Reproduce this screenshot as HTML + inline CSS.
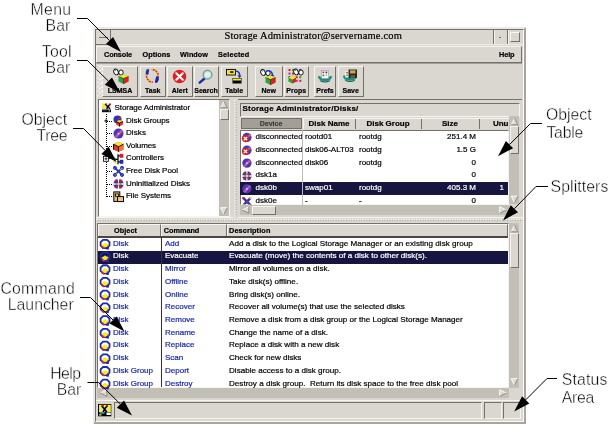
<!DOCTYPE html>
<html><head><meta charset="utf-8"><title>Storage Administrator</title>
<style>
html,body{margin:0;padding:0;background:#fff;}
body{width:609px;height:424px;position:relative;overflow:hidden;font-family:"Liberation Sans",sans-serif;}
div,span{position:absolute;box-sizing:border-box;white-space:nowrap;}
.lbl{font-size:15.8px;line-height:16px;color:#000;-webkit-text-stroke:0.4px #fff;}
.t{font-size:8px;line-height:10px;color:#000;-webkit-text-stroke:0.2px;}
.b{font-weight:bold;}
.bl{color:#1424b4;}
.w{color:#fff;}
.raised{background:#dad7d1;border-top:1px solid #f6f4f0;border-left:1px solid #f6f4f0;border-right:1px solid #76706a;border-bottom:1px solid #76706a;}
.sunk{border-top:1px solid #76706a;border-left:1px solid #76706a;border-right:1px solid #f6f4f0;border-bottom:1px solid #f6f4f0;}
.btn{background:#dad7d1;border-top:1px solid #f6f4f0;border-left:1px solid #f6f4f0;border-right:1px solid #76706a;border-bottom:1px solid #76706a;}
.track{background:#c2bfb7;}
.thumb{background:#dad7d1;border-top:1px solid #f6f4f0;border-left:1px solid #f6f4f0;border-right:1px solid #76706a;border-bottom:1px solid #76706a;}
.sel{background:#15153f;}
svg{position:absolute;left:0;top:0;}
</style></head><body><div id="root" style="left:0;top:0;width:609px;height:424px;will-change:transform;">

<span class="lbl" id="L_Menu" style="left:30.40px;top:1.50px;letter-spacing:0.400px;">Menu</span>
<span class="lbl" id="L_Bar1" style="left:45.40px;top:17.50px;letter-spacing:0.200px;">Bar</span>
<span class="lbl" id="L_Tool" style="left:41.80px;top:43.50px;letter-spacing:0.267px;">Tool</span>
<span class="lbl" id="L_Bar2" style="left:45.40px;top:59.50px;letter-spacing:0.200px;">Bar</span>
<span class="lbl" id="L_Object" style="left:21.40px;top:111.50px;letter-spacing:-0.000px;">Object</span>
<span class="lbl" id="L_Tree" style="left:36.40px;top:128.00px;letter-spacing:-0.267px;">Tree</span>
<span class="lbl" id="L_Command" style="left:0.40px;top:280.50px;letter-spacing:0.267px;">Command</span>
<span class="lbl" id="L_Launcher" style="left:7.80px;top:297.00px;letter-spacing:0.000px;">Launcher</span>
<span class="lbl" id="L_Help" style="left:50.20px;top:365.50px;letter-spacing:-0.533px;">Help</span>
<span class="lbl" id="L_Bar3" style="left:56.80px;top:381.50px;letter-spacing:0.000px;">Bar</span>
<span class="lbl" id="L_ObjectR" style="left:545.90px;top:106.50px;letter-spacing:0.000px;">Object</span>
<span class="lbl" id="L_Table" style="left:546.40px;top:124.50px;letter-spacing:-0.200px;">Table</span>
<span class="lbl" id="L_Splitters" style="left:550.50px;top:178.50px;letter-spacing:0.100px;">Splitters</span>
<span class="lbl" id="L_Status" style="left:561.80px;top:371.50px;letter-spacing:0.160px;">Status</span>
<span class="lbl" id="L_Area" style="left:561.80px;top:389.50px;letter-spacing:-0.267px;">Area</span>
<div class="" style="left:93px;top:27px;width:433px;height:397px;background:#eceae6;"></div>
<div class="" style="left:524px;top:28px;width:2px;height:396px;background:#a8a49e;"></div>
<div class="" style="left:94px;top:422px;width:432px;height:2px;background:#a8a49e;"></div>
<div class="" style="left:95px;top:29px;width:429px;height:393px;border-top:1px solid #76706a;border-left:1px solid #76706a;border-right:1px solid #fbfaf8;border-bottom:1px solid #fbfaf8;background:#dad7d1;"></div>
<div class="" style="left:96px;top:30px;width:427px;height:15px;border-bottom:1px solid #76706a;"></div>
<div class="" style="left:110px;top:30px;width:1px;height:15px;background:#76706a;"></div>
<div class="" style="left:99px;top:37px;width:9px;height:1px;background:#76706a;"></div>
<div class="" style="left:492.5px;top:30px;width:1px;height:15px;background:#76706a;"></div>
<div class="" style="left:493.5px;top:30px;width:1px;height:14px;background:#f4f2ee;"></div>
<div class="" style="left:506.5px;top:30px;width:1px;height:15px;background:#76706a;"></div>
<div class="" style="left:507.5px;top:30px;width:1px;height:14px;background:#f4f2ee;"></div>
<div class="" style="left:111px;top:43.5px;width:412px;height:1px;background:#efede9;"></div>
<div class="" style="left:499px;top:37px;width:2px;height:1px;background:#76706a;"></div>
<div class="" style="left:510px;top:32px;width:10px;height:10px;border:1px solid #76706a;border-top-color:#f6f4f0;border-left-color:#f6f4f0"></div>
<span class="t" style="left:224.5px;top:29.5px;font-size:10.5px;letter-spacing:0.159px;font-family:'Liberation Serif',serif;line-height:12px;">Storage Administrator@servername.com</span>
<div class="raised" style="left:96px;top:46px;width:426px;height:17px;"></div>
<span class="t b" style="left:104px;top:49.5px;font-size:7.3px;letter-spacing:-0.114px;">Console</span>
<span class="t b" style="left:142.5px;top:49.5px;font-size:7.3px;letter-spacing:0.061px;">Options</span>
<span class="t b" style="left:180px;top:49.5px;font-size:7.3px;letter-spacing:0.015px;">Window</span>
<span class="t b" style="left:218px;top:49.5px;font-size:7.3px;letter-spacing:0.184px;">Selected</span>
<span class="t b" style="left:499px;top:49.5px;font-size:7.3px;letter-spacing:-0.080px;">Help</span>
<div class="" style="left:96px;top:63px;width:426px;height:1px;background:#a39e97;"></div>
<div class="btn" style="left:102px;top:66px;width:36px;height:31px;"></div>
<span class="t b" style="left:102px;top:86px;width:36px;text-align:center;font-size:7px;">LSMSA</span>
<div class="btn" style="left:140px;top:66px;width:25.5px;height:31px;"></div>
<span class="t b" style="left:140px;top:86px;width:25.5px;text-align:center;font-size:7px;">Task</span>
<div class="btn" style="left:167px;top:66px;width:25.5px;height:31px;"></div>
<span class="t b" style="left:167px;top:86px;width:25.5px;text-align:center;font-size:7px;">Alert</span>
<div class="btn" style="left:193.5px;top:66px;width:25px;height:31px;"></div>
<span class="t b" style="left:193.5px;top:86px;width:25px;text-align:center;font-size:7px;">Search</span>
<div class="btn" style="left:220.5px;top:66px;width:27.5px;height:31px;"></div>
<span class="t b" style="left:220.5px;top:86px;width:27.5px;text-align:center;font-size:7px;">Table</span>
<div class="btn" style="left:255px;top:66px;width:27.5px;height:31px;"></div>
<span class="t b" style="left:255px;top:86px;width:27.5px;text-align:center;font-size:7px;">New</span>
<div class="btn" style="left:283.5px;top:66px;width:25.5px;height:31px;"></div>
<span class="t b" style="left:283.5px;top:86px;width:25.5px;text-align:center;font-size:7px;">Props</span>
<div class="btn" style="left:314px;top:66px;width:22px;height:31px;"></div>
<span class="t b" style="left:314px;top:86px;width:22px;text-align:center;font-size:7px;">Prefs</span>
<div class="btn" style="left:337.5px;top:66px;width:26.5px;height:31px;"></div>
<span class="t b" style="left:337.5px;top:86px;width:26.5px;text-align:center;font-size:7px;">Save</span>
<div class="sunk" style="left:98px;top:99px;width:132px;height:118px;background:#fff;"></div>
<div class="track" style="left:219px;top:100px;width:10px;height:116px;"></div>
<div class="thumb" style="left:220px;top:109px;width:9px;height:11px;"></div>
<span class="t" style="left:114.5px;top:102.9px;font-size:8px;letter-spacing:-0.068px;">Storage Administrator</span>
<span class="t" style="left:126px;top:115.5px;font-size:8px;letter-spacing:-0.047px;">Disk Groups</span>
<span class="t" style="left:126px;top:128.1px;font-size:8px;letter-spacing:0.089px;">Disks</span>
<span class="t" style="left:126px;top:140.7px;font-size:8px;letter-spacing:-0.098px;">Volumes</span>
<span class="t" style="left:126px;top:153.3px;font-size:8px;letter-spacing:-0.062px;">Controllers</span>
<span class="t" style="left:126px;top:165.9px;font-size:8px;letter-spacing:-0.033px;">Free Disk Pool</span>
<span class="t" style="left:126px;top:178.5px;font-size:8px;letter-spacing:-0.048px;">Uninitialized Disks</span>
<span class="t" style="left:126px;top:191.1px;font-size:8px;letter-spacing:-0.066px;">File Systems</span>
<div style="left:106px;top:114px;width:0;height:83px;border-left:1px dotted #000;"></div>
<div style="left:107px;top:120.5px;width:5px;height:0;border-top:1px dotted #000;"></div>
<div style="left:107px;top:133.1px;width:5px;height:0;border-top:1px dotted #000;"></div>
<div style="left:107px;top:145.7px;width:5px;height:0;border-top:1px dotted #000;"></div>
<div style="left:107px;top:158.3px;width:5px;height:0;border-top:1px dotted #000;"></div>
<div style="left:107px;top:170.9px;width:5px;height:0;border-top:1px dotted #000;"></div>
<div style="left:107px;top:183.5px;width:5px;height:0;border-top:1px dotted #000;"></div>
<div style="left:107px;top:196.1px;width:5px;height:0;border-top:1px dotted #000;"></div>
<div class="" style="left:238px;top:99px;width:284px;height:1px;background:#76706a;"></div>
<div class="sunk" style="left:240px;top:102.5px;width:280px;height:14.5px;"></div>
<span class="t b" style="left:242.5px;top:104px;font-size:8px;letter-spacing:0.216px;">Storage Administrator/Disks/</span>
<div class="sunk" style="left:240px;top:130px;width:269px;height:75px;background:#fff;"></div>
<div class="" style="left:240px;top:117.5px;width:269px;height:12px;background:#dad7d1;border-top:1px solid #f6f4f0;"></div>
<div class="" style="left:240.5px;top:118px;width:61.5px;height:11px;background:#a39e96;border:1px solid #76706a;"></div>
<span class="t b" style="left:240px;top:118.5px;width:62px;text-align:center;font-size:7px;color:#1a1a1a;opacity:0.75;">Device</span>
<span class="t b" style="left:302px;top:119px;width:54px;text-align:center;font-size:8px;">Disk Name</span>
<span class="t b" style="left:356px;top:119px;width:64px;text-align:center;font-size:8px;">Disk Group</span>
<span class="t b" style="left:421px;top:119px;width:58px;text-align:center;font-size:8px;">Size</span>
<span class="t b" style="left:480px;top:119px;width:28.500px;text-align:right;font-size:8px;">Unu</span>
<div class="" style="left:302.5px;top:118px;width:1px;height:11px;background:#f6f4f0;"></div>
<div class="" style="left:355px;top:119px;width:1px;height:10px;background:#76706a;"></div>
<div class="" style="left:421px;top:119px;width:1px;height:10px;background:#76706a;"></div>
<div class="" style="left:479px;top:119px;width:1px;height:10px;background:#76706a;"></div>
<span class="t" style="left:255.5px;top:131.8px;">disconnected</span>
<span class="t" style="left:305px;top:131.8px;">rootd01</span>
<span class="t" style="left:359px;top:131.8px;">rootdg</span>
<span class="t" style="left:421px;top:131.8px;width:55px;text-align:right;">251.4 M</span>
<span class="t" style="left:480px;top:131.8px;width:24px;text-align:right;"></span>
<span class="t" style="left:255.5px;top:144.65px;">disconnected</span>
<span class="t" style="left:305px;top:144.65px;">disk06-ALT03</span>
<span class="t" style="left:359px;top:144.65px;">rootdg</span>
<span class="t" style="left:421px;top:144.65px;width:55px;text-align:right;">1.5 G</span>
<span class="t" style="left:480px;top:144.65px;width:24px;text-align:right;"></span>
<span class="t" style="left:255.5px;top:157.5px;">disconnected</span>
<span class="t" style="left:305px;top:157.5px;">disk06</span>
<span class="t" style="left:359px;top:157.5px;">rootdg</span>
<span class="t" style="left:421px;top:157.5px;width:55px;text-align:right;">0</span>
<span class="t" style="left:480px;top:157.5px;width:24px;text-align:right;"></span>
<span class="t" style="left:255.5px;top:170.35px;">dsk1a</span>
<span class="t" style="left:305px;top:170.35px;"></span>
<span class="t" style="left:359px;top:170.35px;"></span>
<span class="t" style="left:421px;top:170.35px;width:55px;text-align:right;">0</span>
<span class="t" style="left:480px;top:170.35px;width:24px;text-align:right;"></span>
<div class="sel" style="left:240px;top:182px;width:268px;height:12.5px;"></div>
<span class="t w" style="left:255.5px;top:183.2px;">dsk0b</span>
<span class="t w" style="left:305px;top:183.2px;">swap01</span>
<span class="t w" style="left:359px;top:183.2px;">rootdg</span>
<span class="t w" style="left:421px;top:183.2px;width:55px;text-align:right;">405.3 M</span>
<span class="t w" style="left:480px;top:183.2px;width:24px;text-align:right;">1</span>
<span class="t" style="left:255.5px;top:196.05px;">dsk0e</span>
<span class="t" style="left:305px;top:196.05px;">-</span>
<span class="t" style="left:359px;top:196.05px;">-</span>
<span class="t" style="left:421px;top:196.05px;width:55px;text-align:right;">0</span>
<span class="t" style="left:480px;top:196.05px;width:24px;text-align:right;"></span>
<div class="" style="left:302px;top:130px;width:1px;height:75px;background:#bbb;"></div>
<div class="track" style="left:509px;top:116px;width:10px;height:88px;"></div>
<div class="thumb" style="left:510px;top:126px;width:9px;height:28px;"></div>
<div class="track" style="left:240px;top:205px;width:269px;height:10px;"></div>
<div class="thumb" style="left:251.5px;top:205.5px;width:24px;height:9.5px;"></div>
<div class="" style="left:96px;top:217px;width:137px;height:1px;background:#f4f2ee;"></div>
<div class="" style="left:238px;top:217px;width:285px;height:1px;background:#f4f2ee;"></div>
<div class="sunk" style="left:97px;top:223px;width:412px;height:165px;background:#fff;"></div>
<div class="" style="left:98px;top:224px;width:410px;height:13.5px;background:#dad7d1;border-bottom:2px solid #4c4742;"></div>
<div class="btn" style="left:98px;top:224px;width:63px;height:12px;border-bottom:none;"></div>
<div class="btn" style="left:161px;top:224px;width:65.5px;height:12px;border-bottom:none;"></div>
<div class="btn" style="left:226.5px;top:224px;width:281.5px;height:12px;border-bottom:none;"></div>
<span class="t b" style="left:114px;top:225.5px;font-size:7.3px;letter-spacing:0.047px;">Object</span>
<span class="t b" style="left:163.8px;top:225.5px;font-size:7.3px;letter-spacing:-0.027px;">Command</span>
<span class="t b" style="left:229px;top:225.5px;font-size:7.3px;letter-spacing:0.122px;">Description</span>
<span class="t bl" style="left:113px;top:238.7px;">Disk</span>
<span class="t bl" style="left:165px;top:238.7px;">Add</span>
<span class="t" style="left:229px;top:238.7px;font-size:8.1px;letter-spacing:0.013px;">Add a disk to the Logical Storage Manager or an existing disk group</span>
<div class="sel" style="left:98px;top:251px;width:410px;height:12.7px;"></div>
<span class="t w" style="left:113px;top:251.42px;">Disk</span>
<span class="t w" style="left:165px;top:251.42px;">Evacuate</span>
<span class="t w" style="left:229px;top:251.42px;font-size:8.1px;letter-spacing:0.000px;">Evacuate (move) the contents of a disk to other disk(s).</span>
<span class="t bl" style="left:113px;top:264.14px;">Disk</span>
<span class="t bl" style="left:165px;top:264.14px;">Mirror</span>
<span class="t" style="left:229px;top:264.14px;font-size:8.1px;letter-spacing:0.000px;">Mirror all volumes on a disk.</span>
<span class="t bl" style="left:113px;top:276.86px;">Disk</span>
<span class="t bl" style="left:165px;top:276.86px;">Offline</span>
<span class="t" style="left:229px;top:276.86px;font-size:8.1px;letter-spacing:0.000px;">Take disk(s) offline.</span>
<span class="t bl" style="left:113px;top:289.58px;">Disk</span>
<span class="t bl" style="left:165px;top:289.58px;">Online</span>
<span class="t" style="left:229px;top:289.58px;font-size:8.1px;letter-spacing:0.000px;">Bring disk(s) online.</span>
<span class="t bl" style="left:113px;top:302.3px;">Disk</span>
<span class="t bl" style="left:165px;top:302.3px;">Recover</span>
<span class="t" style="left:229px;top:302.3px;font-size:8.1px;letter-spacing:0.000px;">Recover all volume(s) that use the selected disks</span>
<span class="t bl" style="left:113px;top:315.02px;">Disk</span>
<span class="t bl" style="left:165px;top:315.02px;">Remove</span>
<span class="t" style="left:229px;top:315.02px;font-size:8.1px;letter-spacing:-0.002px;">Remove a disk from a disk group or the Logical Storage Manager</span>
<span class="t bl" style="left:113px;top:327.74px;">Disk</span>
<span class="t bl" style="left:165px;top:327.74px;">Rename</span>
<span class="t" style="left:229px;top:327.74px;font-size:8.1px;letter-spacing:0.000px;">Change the name of a disk.</span>
<span class="t bl" style="left:113px;top:340.46px;">Disk</span>
<span class="t bl" style="left:165px;top:340.46px;">Replace</span>
<span class="t" style="left:229px;top:340.46px;font-size:8.1px;letter-spacing:0.000px;">Replace a disk with a new disk</span>
<span class="t bl" style="left:113px;top:353.18px;">Disk</span>
<span class="t bl" style="left:165px;top:353.18px;">Scan</span>
<span class="t" style="left:229px;top:353.18px;font-size:8.1px;letter-spacing:0.000px;">Check for new disks</span>
<span class="t bl" style="left:113px;top:365.9px;">Disk Group</span>
<span class="t bl" style="left:165px;top:365.9px;">Deport</span>
<span class="t" style="left:229px;top:365.9px;font-size:8.1px;letter-spacing:0.000px;">Disable access to a disk group.</span>
<span class="t bl" style="left:113px;top:378.62px;">Disk Group</span>
<span class="t bl" style="left:165px;top:378.62px;">Destroy</span>
<span class="t" style="left:229px;top:378.62px;font-size:8.1px;letter-spacing:0.000px;">Destroy a disk group.&nbsp; Return its disk space to the free disk pool</span>
<div class="" style="left:161px;top:237px;width:1px;height:150px;background:#333;"></div>
<div class="track" style="left:509px;top:223px;width:10px;height:165px;"></div>
<div class="thumb" style="left:510px;top:233px;width:9px;height:35px;"></div>
<div class="track" style="left:97px;top:388px;width:412px;height:10px;"></div>
<div class="" style="left:96px;top:400px;width:427px;height:1px;background:#f6f4f0;"></div>
<div class="sunk" style="left:114px;top:402px;width:368px;height:17px;"></div>
<div class="sunk" style="left:484px;top:402px;width:18px;height:17px;"></div>
<div class="sunk" style="left:503px;top:402px;width:18px;height:17px;"></div>
<svg width="609" height="424" viewBox="0 0 609 424"><defs><pattern id="dotv" x="233" y="100" width="5" height="2.560" patternUnits="userSpaceOnUse"><rect x="1.500" y="0.300" width="1.200" height="1.200" fill="#fff"/><rect x="2.600" y="1.400" width="1" height="1" fill="#9a958e"/></pattern><pattern id="doth" x="96" y="218" width="2.560" height="4.500" patternUnits="userSpaceOnUse"><rect x="0.300" y="0.800" width="1.200" height="1.200" fill="#fff"/><rect x="1.400" y="1.900" width="1" height="1" fill="#9a958e"/></pattern><pattern id="dotg" x="97" y="65" width="4.400" height="4.400" patternUnits="userSpaceOnUse"><path d="M0.200 0.200 L2 2 M4.200 0.200 L2.400 2 M0.200 4.200 L2 2.400 M4.200 4.200 L2.400 2.400" stroke="#fff" stroke-width="1"/><path d="M1 1.200 L1.800 2.800 M3.200 3 L4 4.400" stroke="#9a958e" stroke-width="0.700"/></pattern><clipPath id="ctab"><rect x="240" y="130" width="268" height="74.500"/></clipPath></defs><rect x="97.500" y="65" width="5" height="31.500" fill="url(#dotg)"/><g transform="translate(113.5,68.5) scale(1)"><g transform="translate(0,0) scale(1)"><ellipse cx="2.5" cy="3.5" rx="2.2" ry="3" fill="#fff" stroke="#000" stroke-width="0.9" transform="rotate(-25 2.5 3.5)"/><ellipse cx="7.5" cy="4" rx="2.2" ry="2.6" fill="#fff" stroke="#000" stroke-width="0.9"/><path d="M1.5 2.5 L3 1.2" stroke="#20b090" stroke-width="1"/></g><g transform="translate(5,5) scale(1)"><path d="M0 3 L5 1 L10 3 L10 8 L5 10.5 L0 8Z" fill="#20a838"/><path d="M5 5 L10 3 L10 8 L5 10.5Z" fill="#f01818"/><path d="M0 3 L5 1 L10 3 L5 5Z" fill="#f4ec20"/><path d="M0 3 L5 5 L10 3 M5 5 L5 10.5" stroke="#303030" stroke-width="0.7" fill="none"/></g></g><g transform="translate(144.8,68.8) scale(1)"><path d="M2 0.500 L4.500 0.500 L4 3 L3.500 6 L1 6 L1 3Z" fill="#1c28b8"/><path d="M12.500 14 L10 14 L10.500 11 L11.500 7.500 L14 7.500 L14 11Z" fill="#1c28b8"/><path d="M1.500 6 L2 9.500 L4.500 12.500 L8 13.500" stroke="#e82020" stroke-width="1.500" fill="none"/><path d="M1.500 6 L2 9.500 L4.500 12.500 L8 13.500" stroke="#f4e020" stroke-width="1.500" fill="none" stroke-dasharray="1.200 1.800"/><path d="M7 0.800 L10.500 1.500 L13 4.500 L13.500 7.500" stroke="#e82020" stroke-width="1.500" fill="none"/><path d="M7 0.800 L10.500 1.500 L13 4.500 L13.500 7.500" stroke="#f4e020" stroke-width="1.500" fill="none" stroke-dasharray="1.200 1.800"/></g><g transform="translate(172.5,69.5) scale(1)"><circle cx="7" cy="7" r="6.8" fill="#e81c1c"/><path d="M3.8 3.8 L10.2 10.2 M10.2 3.8 L3.8 10.2" stroke="#fff" stroke-width="2.2" stroke-linecap="round"/></g><g transform="translate(198.5,69.5) scale(1)"><path d="M6 9 L1.2 13.2" stroke="#1c2cb0" stroke-width="2.4" stroke-linecap="round"/><circle cx="9" cy="5.2" r="4.4" fill="#b8ece0" stroke="#8a9098" stroke-width="1.3"/><circle cx="9" cy="5.2" r="2.4" fill="#d8f8f0"/></g><g transform="translate(226,68.5) scale(1)"><rect x="0.5" y="1" width="9" height="5.5" fill="#f4e820" stroke="#000" stroke-width="0.9"/><rect x="4" y="2.8" width="3.5" height="1.5" fill="#000"/><path d="M9.5 2.5 C13 2.5 14 5 13.5 8" stroke="#2038c8" stroke-width="1.6" fill="none"/><path d="M11.5 7 L15.5 7 L13.5 9.8Z" fill="#2038c8"/><rect x="6.5" y="9.5" width="9" height="5.5" fill="#000"/><rect x="7" y="10" width="8" height="2" fill="#f4e820"/></g><g transform="translate(260.5,69) scale(1)"><g transform="translate(0,0) scale(1)"><ellipse cx="2.5" cy="3.5" rx="2.2" ry="3" fill="#fff" stroke="#000" stroke-width="0.9" transform="rotate(-25 2.5 3.5)"/><ellipse cx="7.5" cy="4" rx="2.2" ry="2.6" fill="#fff" stroke="#000" stroke-width="0.9"/><path d="M1.5 2.5 L3 1.2" stroke="#20b090" stroke-width="1"/></g><path d="M6 2 C10 1 12 3.5 12 6.5" stroke="#2038c8" stroke-width="1.6" fill="none"/><path d="M10 6 L14 6 L12 8.6Z" fill="#2038c8"/><g transform="translate(5,5.5) scale(1)"><path d="M0 3 L5 1 L10 3 L10 8 L5 10.5 L0 8Z" fill="#20a838"/><path d="M5 5 L10 3 L10 8 L5 10.5Z" fill="#f01818"/><path d="M0 3 L5 1 L10 3 L5 5Z" fill="#f4ec20"/><path d="M0 3 L5 5 L10 3 M5 5 L5 10.5" stroke="#303030" stroke-width="0.7" fill="none"/></g></g><g transform="translate(287.5,68.5) scale(1)"><rect x="1" y="0.5" width="2" height="2" fill="#e02020"/><rect x="4.6" y="0.5" width="2" height="2" fill="#20a030"/><rect x="8.2" y="0.5" width="2" height="2" fill="#e0a020"/><rect x="11.8" y="0.5" width="2" height="2" fill="#2030c0"/><rect x="1" y="4.1" width="2" height="2" fill="#c020c0"/><rect x="4.6" y="4.1" width="2" height="2" fill="#e02020"/><rect x="8.2" y="4.1" width="2" height="2" fill="#20a030"/><rect x="11.8" y="4.1" width="2" height="2" fill="#e0a020"/><rect x="1" y="7.7" width="2" height="2" fill="#2030c0"/><rect x="4.6" y="7.7" width="2" height="2" fill="#c020c0"/><rect x="8.2" y="7.7" width="2" height="2" fill="#e02020"/><rect x="11.8" y="7.7" width="2" height="2" fill="#20a030"/><rect x="1" y="11.3" width="2" height="2" fill="#e0a020"/><rect x="4.6" y="11.3" width="2" height="2" fill="#2030c0"/><rect x="8.2" y="11.3" width="2" height="2" fill="#c020c0"/><rect x="11.8" y="11.3" width="2" height="2" fill="#e02020"/><g transform="translate(6,0) scale(1)"><ellipse cx="2.5" cy="3.5" rx="2.2" ry="3" fill="#fff" stroke="#000" stroke-width="0.9" transform="rotate(-25 2.5 3.5)"/><ellipse cx="7.5" cy="4" rx="2.2" ry="2.6" fill="#fff" stroke="#000" stroke-width="0.9"/><path d="M1.5 2.5 L3 1.2" stroke="#20b090" stroke-width="1"/></g><path d="M1 9 L5 7 L8.5 9 L8.5 13 L5 15 L1 13Z" fill="#20a838"/><path d="M5 11 L8.5 9 L8.5 13 L5 15Z" fill="#f01818"/><path d="M1 9 L5 7 L8.5 9 L5 11Z" fill="#f4ec20"/></g><g transform="translate(317.5,70) scale(1)"><path d="M0.5 6.5 C1.5 5.5 3 6.2 3.5 7.2 L11.5 7.2 C12 6.2 13.5 5.5 14.5 6.5 C14.5 9 12 11.2 7.5 11.2 C3 11.2 0.5 9 0.5 6.5Z" fill="#189080"/><path d="M2 9.8 C5 12 10 12 13 9.8 L12 11.6 C9 12.8 6 12.8 3 11.6Z" fill="#0c5c50"/><rect x="4" y="0.500" width="7" height="8" fill="#fff" stroke="#889" stroke-width="0.5"/><rect x="5" y="1.5" width="1.800" height="1.800" fill="#e02020"/><rect x="8" y="1.5" width="1.800" height="1.800" fill="#2030c0"/><rect x="5" y="4.5" width="1.800" height="1.800" fill="#20a030"/><rect x="8" y="4.5" width="1.800" height="1.300" fill="#e0a020"/></g><g transform="translate(342.5,69.5) scale(1)"><path d="M0.5 6.5 C1.5 5.5 3 6.2 3.5 7.2 L11.5 7.2 C12 6.2 13.5 5.5 14.5 6.5 C14.5 9 12 11.2 7.5 11.2 C3 11.2 0.5 9 0.5 6.5Z" fill="#189080"/><path d="M2 9.8 C5 12 10 12 13 9.8 L12 11.6 C9 12.8 6 12.8 3 11.6Z" fill="#0c5c50"/><rect x="3" y="1.500" width="5" height="6.500" fill="#fff"/><rect x="3.800" y="2.300" width="1.600" height="1.600" fill="#e02020"/><rect x="3.800" y="5" width="1.600" height="1.600" fill="#20a030"/><rect x="6" y="0" width="8.500" height="8.500" fill="#282820"/><rect x="7.500" y="0.800" width="5.500" height="3.200" fill="#c8a838"/><rect x="8" y="5.500" width="4.500" height="3" fill="#605840"/></g><polygon points="224.0,101.2 227.3,107.8 220.7,107.8" fill="#dddad4"/><line x1="220.7" y1="107.8" x2="224.0" y2="101.2" stroke="#fff" stroke-width="0.9"/><line x1="224.0" y1="101.2" x2="227.3" y2="107.8" stroke="#8a857e" stroke-width="0.9"/><line x1="227.3" y1="107.8" x2="220.7" y2="107.8" stroke="#8a857e" stroke-width="0.9"/><polygon points="220.7,207.7 227.3,207.7 224.0,214.3" fill="#dddad4"/><line x1="220.7" y1="207.7" x2="227.3" y2="207.7" stroke="#fff" stroke-width="0.9"/><line x1="224.0" y1="214.3" x2="220.7" y2="207.7" stroke="#fff" stroke-width="0.9"/><line x1="227.3" y1="207.7" x2="224.0" y2="214.3" stroke="#8a857e" stroke-width="0.9"/><g transform="translate(102,103.4) scale(1)"><rect x="0" y="0" width="4" height="6.500" fill="#f4f030"/><rect x="3" y="1.500" width="6" height="5" fill="#d8d8d4"/><path d="M3 0.500 L5.500 3.200 L8.500 0.500 M5.500 3.200 L4.800 6 M6 3 L7.800 5.500" stroke="#000" stroke-width="1.300" fill="none"/><rect x="3.800" y="0" width="1.400" height="1.400" fill="#e81818"/><rect x="7.200" y="0" width="1.400" height="1.400" fill="#e81818"/><rect x="0" y="6.200" width="9" height="2.600" fill="#000"/><rect x="0.500" y="7" width="4" height="1" fill="#2030d0"/><rect x="6.500" y="7" width="1.500" height="1" fill="#d8d8d4"/></g><g transform="translate(113,115.5) scale(1)"><circle cx="4.5" cy="4" r="4" fill="#2a34b8"/><path d="M4.5 4 L7.5 0.8 L8.6 3Z" fill="#d02828"/><path d="M3 6 L6.5 4.5 L10 6 L10 9 L6.5 11 L3 9Z" fill="#e83818"/><path d="M3 6 L6.5 4.5 L10 6 L6.5 7.6Z" fill="#f4e020"/><path d="M3 6 L6.5 7.6 L10 6 M6.5 7.6 L6.5 11" stroke="#000" stroke-width="0.9" fill="none"/></g><g transform="translate(113,128.1) scale(1)"><circle cx="5.5" cy="5.5" r="5" fill="#4a38b8"/><path d="M1.2 8.2 L8.2 1.2 L10 3.4 L3.4 10Z" fill="#b048b0"/><path d="M3 9 L9 3" stroke="#e070b0" stroke-width="0.8"/><circle cx="5.5" cy="5.5" r="0.9" fill="#e8d8f0"/></g><g transform="translate(113,140.7) scale(1)"><path d="M0.5 3.5 L5.5 1 L10.5 3.5 L10.5 9 L5.5 11 L0.5 9Z" fill="#e83818"/><path d="M5.5 6 L10.5 3.5 L10.5 9 L5.5 11Z" fill="#f07828"/><path d="M0.5 3.5 L5.5 1 L10.5 3.5 L5.5 6Z" fill="#f8e820"/><path d="M0.5 3.5 L5.5 6 L10.5 3.5 M5.5 6 L5.5 11 M0.5 3.5 L0.5 9" stroke="#000" stroke-width="0.9" fill="none"/></g><g transform="translate(113,153.3) scale(1)"><path d="M1 6 L5 6 M5 1 L5 11 M5 2.5 L7 2.5 M5 8.5 L7 8.5" stroke="#000" stroke-width="1.2" fill="none"/><rect x="6.8" y="0.5" width="3.5" height="4" fill="#e81818"/><rect x="6.8" y="6.5" width="3.5" height="4" fill="#1828c0"/><path d="M0.5 7.5 L3.5 10.5" stroke="#e8e020" stroke-width="1.4"/><path d="M1 4 L3 6" stroke="#20a030" stroke-width="1.2"/></g><g transform="translate(113,165.9) scale(1)"><path d="M1.5 1.5 L9.5 9.5 M9.5 1.5 L1.5 9.5" stroke="#2434c0" stroke-width="1.8" stroke-linecap="round"/><circle cx="2" cy="2" r="1.6" fill="none" stroke="#2434c0" stroke-width="1"/><circle cx="9" cy="2" r="1.6" fill="none" stroke="#2434c0" stroke-width="1"/><circle cx="2" cy="9" r="1.6" fill="none" stroke="#2434c0" stroke-width="1"/><circle cx="9" cy="9" r="1.6" fill="none" stroke="#2434c0" stroke-width="1"/><path d="M7 4 L8.6 2.4 M3 8.6 L4.4 7.2" stroke="#f0e040" stroke-width="1"/></g><g transform="translate(113,178.5) scale(1)"><circle cx="5.5" cy="5.5" r="5" fill="#2e2eb0"/><path d="M5.5 5.5 L1.5 2 L3 0.8Z M5.5 5.5 L9.5 9 L8 10.2Z M5.5 5.5 L9.6 2.2 L8.2 1Z M5.5 5.5 L1.4 8.8 L2.8 10Z" fill="#e02020"/><path d="M5.5 5.5 L0.5 4.5 L0.5 6.5Z M5.5 5.5 L10.5 4.5 L10.5 6.5Z M5.5 5.5 L4.5 0.5 L6.5 0.5Z M5.5 5.5 L4.5 10.5 L6.5 10.5Z" fill="#fff"/><circle cx="5.5" cy="5.5" r="1.3" fill="#f0e040"/></g><g transform="translate(113,191.1) scale(1)"><rect x="0.8" y="0.8" width="6" height="9.5" fill="#e8c070" stroke="#000" stroke-width="1"/><rect x="4.5" y="5.5" width="6" height="5" fill="#f0c880" stroke="#000" stroke-width="1"/><rect x="2.5" y="2.8" width="3" height="2.4" fill="#f8e0a0" stroke="#000" stroke-width="0.8"/></g><rect x="103.500" y="156.300" width="5" height="5" fill="#fff" stroke="#000" stroke-width="0.800"/><path d="M104.500 158.800 L107.500 158.800 M106 157.300 L106 160.300" stroke="#000" stroke-width="0.800"/><path d="M104.300 120.900 L107.800 120.900 M106 119.200 L106 122.600" stroke="#000" stroke-width="0.900"/><rect x="233" y="100" width="5" height="117" fill="url(#dotv)"/><g clip-path="url(#ctab)"><g transform="translate(241.8,132.3) scale(0.93)"><circle cx="5.5" cy="5.5" r="5" fill="#4a38b8"/><path d="M1.2 8.2 L8.2 1.2 L10 3.4 L3.4 10Z" fill="#b048b0"/><path d="M3 9 L9 3" stroke="#e070b0" stroke-width="0.8"/><circle cx="5.5" cy="5.5" r="0.9" fill="#e8d8f0"/><circle cx="4" cy="6.800" r="3.800" fill="#e01818"/><path d="M2.200 5 L5.800 8.600 M5.800 5 L2.200 8.600" stroke="#fff" stroke-width="1.400"/></g></g><g clip-path="url(#ctab)"><g transform="translate(241.8,145.15) scale(0.93)"><circle cx="5.5" cy="5.5" r="5" fill="#4a38b8"/><path d="M1.2 8.2 L8.2 1.2 L10 3.4 L3.4 10Z" fill="#b048b0"/><path d="M3 9 L9 3" stroke="#e070b0" stroke-width="0.8"/><circle cx="5.5" cy="5.5" r="0.9" fill="#e8d8f0"/><circle cx="4" cy="6.800" r="3.800" fill="#e01818"/><path d="M2.200 5 L5.800 8.600 M5.800 5 L2.200 8.600" stroke="#fff" stroke-width="1.400"/></g></g><g clip-path="url(#ctab)"><g transform="translate(241.8,158) scale(0.93)"><circle cx="5.5" cy="5.5" r="5" fill="#4a38b8"/><path d="M1.2 8.2 L8.2 1.2 L10 3.4 L3.4 10Z" fill="#b048b0"/><path d="M3 9 L9 3" stroke="#e070b0" stroke-width="0.8"/><circle cx="5.5" cy="5.5" r="0.9" fill="#e8d8f0"/></g></g><g clip-path="url(#ctab)"><g transform="translate(241.8,170.85) scale(0.93)"><circle cx="5.5" cy="5.5" r="5" fill="#2e2eb0"/><path d="M5.5 5.5 L1.5 2 L3 0.8Z M5.5 5.5 L9.5 9 L8 10.2Z M5.5 5.5 L9.6 2.2 L8.2 1Z M5.5 5.5 L1.4 8.8 L2.8 10Z" fill="#e02020"/><path d="M5.5 5.5 L0.5 4.5 L0.5 6.5Z M5.5 5.5 L10.5 4.5 L10.5 6.5Z M5.5 5.5 L4.5 0.5 L6.5 0.5Z M5.5 5.5 L4.5 10.5 L6.5 10.5Z" fill="#fff"/><circle cx="5.5" cy="5.5" r="1.3" fill="#f0e040"/></g></g><g clip-path="url(#ctab)"><g transform="translate(241.8,183.7) scale(0.93)"><circle cx="5.5" cy="5.5" r="5" fill="#4a38b8"/><path d="M1.2 8.2 L8.2 1.2 L10 3.4 L3.4 10Z" fill="#b048b0"/><path d="M3 9 L9 3" stroke="#e070b0" stroke-width="0.8"/><circle cx="5.5" cy="5.5" r="0.9" fill="#e8d8f0"/></g></g><g clip-path="url(#ctab)"><g transform="translate(241.8,196.55) scale(0.93)"><path d="M1.5 1.5 L9.5 9.5 M9.5 1.5 L1.5 9.5" stroke="#2434c0" stroke-width="2.600"/><rect x="0.500" y="0.500" width="2.200" height="2.200" fill="#e02020"/><rect x="8.300" y="8.300" width="2.200" height="2.200" fill="#e02020"/><rect x="8.300" y="0.500" width="2.200" height="2.200" fill="#f0e020"/><rect x="0.500" y="8.300" width="2.200" height="2.200" fill="#f0e020"/><rect x="4.500" y="4.500" width="2" height="2" fill="#e02020"/></g></g><polygon points="514.5,118.2 517.8,124.8 511.2,124.8" fill="#dddad4"/><line x1="511.2" y1="124.8" x2="514.5" y2="118.2" stroke="#fff" stroke-width="0.9"/><line x1="514.5" y1="118.2" x2="517.8" y2="124.8" stroke="#8a857e" stroke-width="0.9"/><line x1="517.8" y1="124.8" x2="511.2" y2="124.8" stroke="#8a857e" stroke-width="0.9"/><polygon points="511.2,196.2 517.8,196.2 514.5,202.8" fill="#dddad4"/><line x1="511.2" y1="196.2" x2="517.8" y2="196.2" stroke="#fff" stroke-width="0.9"/><line x1="514.5" y1="202.8" x2="511.2" y2="196.2" stroke="#fff" stroke-width="0.9"/><line x1="517.8" y1="196.2" x2="514.5" y2="202.8" stroke="#8a857e" stroke-width="0.9"/><polygon points="242.2,210.0 248.8,206.7 248.8,213.3" fill="#dddad4"/><line x1="242.2" y1="210.0" x2="248.8" y2="206.7" stroke="#fff" stroke-width="0.9"/><line x1="248.8" y1="206.7" x2="248.8" y2="213.3" stroke="#8a857e" stroke-width="0.9"/><line x1="248.8" y1="213.3" x2="242.2" y2="210.0" stroke="#8a857e" stroke-width="0.9"/><polygon points="499.7,206.7 506.3,210.0 499.7,213.3" fill="#dddad4"/><line x1="499.7" y1="213.3" x2="499.7" y2="206.7" stroke="#fff" stroke-width="0.9"/><line x1="499.7" y1="206.7" x2="506.3" y2="210.0" stroke="#fff" stroke-width="0.9"/><line x1="506.3" y1="210.0" x2="499.7" y2="213.3" stroke="#8a857e" stroke-width="0.9"/><rect x="96" y="218" width="427" height="4.500" fill="url(#doth)"/><g transform="translate(99.8,239) scale(1)"><path d="M3.3 0.8 L7.200 0.8 L9.700 3.2 L9.700 6.500 L7.600 9 L3.200 9 L0.800 6.500 L0.800 3.200Z" fill="#fff" stroke="#1a2ab4" stroke-width="1.800"/><path d="M1.800 5.600 L4.300 4.600 L5.200 3.600 L6.200 4.600 L8.800 5.400 L7.300 7.800 L5.200 8.600 L3.200 8Z" fill="#f8ec20"/><path d="M1.500 6.500 L3.300 7.300 L5 9.800 L4 10.300 L1.800 8.300Z" fill="#e82020"/><path d="M7.800 6.600 L8.800 6.200 L8.300 8 L7.300 8.200Z" fill="#e82020"/><rect x="6.500" y="8.300" width="2.500" height="2.200" fill="#1a2ab4"/></g><g transform="translate(99.8,251.72) scale(1)"><path d="M3.3 0.8 L7.200 0.8 L9.700 3.2 L9.700 6.500 L7.600 9 L3.200 9 L0.800 6.500 L0.800 3.200Z" fill="none" stroke="#1a2ab4" stroke-width="1.800"/><path d="M1.800 5.600 L4.300 4.600 L5.200 3.600 L6.200 4.600 L8.800 5.400 L7.300 7.800 L5.200 8.600 L3.200 8Z" fill="#f8ec20"/><path d="M1.500 6.500 L3.300 7.300 L5 9.800 L4 10.300 L1.800 8.300Z" fill="#e82020"/><path d="M7.800 6.600 L8.800 6.200 L8.300 8 L7.300 8.200Z" fill="#e82020"/><rect x="6.500" y="8.300" width="2.500" height="2.200" fill="#1a2ab4"/></g><g transform="translate(99.8,264.44) scale(1)"><path d="M3.3 0.8 L7.200 0.8 L9.700 3.2 L9.700 6.500 L7.600 9 L3.200 9 L0.800 6.500 L0.800 3.200Z" fill="#fff" stroke="#1a2ab4" stroke-width="1.800"/><path d="M1.800 5.600 L4.300 4.600 L5.200 3.600 L6.200 4.600 L8.800 5.400 L7.300 7.800 L5.200 8.600 L3.200 8Z" fill="#f8ec20"/><path d="M1.500 6.500 L3.300 7.300 L5 9.800 L4 10.300 L1.800 8.300Z" fill="#e82020"/><path d="M7.800 6.600 L8.800 6.200 L8.300 8 L7.300 8.200Z" fill="#e82020"/><rect x="6.500" y="8.300" width="2.500" height="2.200" fill="#1a2ab4"/></g><g transform="translate(99.8,277.16) scale(1)"><path d="M3.3 0.8 L7.200 0.8 L9.700 3.2 L9.700 6.500 L7.600 9 L3.200 9 L0.800 6.500 L0.800 3.200Z" fill="#fff" stroke="#1a2ab4" stroke-width="1.800"/><path d="M1.800 5.600 L4.300 4.600 L5.200 3.600 L6.200 4.600 L8.800 5.400 L7.300 7.800 L5.200 8.600 L3.200 8Z" fill="#f8ec20"/><path d="M1.500 6.500 L3.300 7.300 L5 9.800 L4 10.300 L1.800 8.300Z" fill="#e82020"/><path d="M7.800 6.600 L8.800 6.200 L8.300 8 L7.300 8.200Z" fill="#e82020"/><rect x="6.500" y="8.300" width="2.500" height="2.200" fill="#1a2ab4"/></g><g transform="translate(99.8,289.88) scale(1)"><path d="M3.3 0.8 L7.200 0.8 L9.700 3.2 L9.700 6.500 L7.600 9 L3.200 9 L0.800 6.500 L0.800 3.200Z" fill="#fff" stroke="#1a2ab4" stroke-width="1.800"/><path d="M1.800 5.600 L4.300 4.600 L5.200 3.600 L6.200 4.600 L8.800 5.400 L7.300 7.800 L5.200 8.600 L3.200 8Z" fill="#f8ec20"/><path d="M1.500 6.500 L3.300 7.300 L5 9.800 L4 10.300 L1.800 8.300Z" fill="#e82020"/><path d="M7.800 6.600 L8.800 6.200 L8.300 8 L7.300 8.200Z" fill="#e82020"/><rect x="6.500" y="8.300" width="2.500" height="2.200" fill="#1a2ab4"/></g><g transform="translate(99.8,302.6) scale(1)"><path d="M3.3 0.8 L7.200 0.8 L9.700 3.2 L9.700 6.500 L7.600 9 L3.200 9 L0.800 6.500 L0.800 3.200Z" fill="#fff" stroke="#1a2ab4" stroke-width="1.800"/><path d="M1.800 5.600 L4.300 4.600 L5.200 3.600 L6.200 4.600 L8.800 5.400 L7.300 7.800 L5.200 8.600 L3.200 8Z" fill="#f8ec20"/><path d="M1.500 6.500 L3.300 7.300 L5 9.800 L4 10.300 L1.800 8.300Z" fill="#e82020"/><path d="M7.800 6.600 L8.800 6.200 L8.300 8 L7.300 8.200Z" fill="#e82020"/><rect x="6.500" y="8.300" width="2.500" height="2.200" fill="#1a2ab4"/></g><g transform="translate(99.8,315.32) scale(1)"><path d="M3.3 0.8 L7.200 0.8 L9.700 3.2 L9.700 6.500 L7.600 9 L3.200 9 L0.800 6.500 L0.800 3.200Z" fill="#fff" stroke="#1a2ab4" stroke-width="1.800"/><path d="M1.800 5.600 L4.300 4.600 L5.200 3.600 L6.200 4.600 L8.800 5.400 L7.300 7.800 L5.200 8.600 L3.200 8Z" fill="#f8ec20"/><path d="M1.500 6.500 L3.300 7.300 L5 9.800 L4 10.300 L1.800 8.300Z" fill="#e82020"/><path d="M7.800 6.600 L8.800 6.200 L8.300 8 L7.300 8.200Z" fill="#e82020"/><rect x="6.500" y="8.300" width="2.500" height="2.200" fill="#1a2ab4"/></g><g transform="translate(99.8,328.04) scale(1)"><path d="M3.3 0.8 L7.200 0.8 L9.700 3.2 L9.700 6.500 L7.600 9 L3.200 9 L0.800 6.500 L0.800 3.200Z" fill="#fff" stroke="#1a2ab4" stroke-width="1.800"/><path d="M1.800 5.600 L4.300 4.600 L5.200 3.600 L6.200 4.600 L8.800 5.400 L7.300 7.800 L5.200 8.600 L3.200 8Z" fill="#f8ec20"/><path d="M1.500 6.500 L3.300 7.300 L5 9.800 L4 10.300 L1.800 8.300Z" fill="#e82020"/><path d="M7.800 6.600 L8.800 6.200 L8.300 8 L7.300 8.200Z" fill="#e82020"/><rect x="6.500" y="8.300" width="2.500" height="2.200" fill="#1a2ab4"/></g><g transform="translate(99.8,340.76) scale(1)"><path d="M3.3 0.8 L7.200 0.8 L9.700 3.2 L9.700 6.500 L7.600 9 L3.200 9 L0.800 6.500 L0.800 3.200Z" fill="#fff" stroke="#1a2ab4" stroke-width="1.800"/><path d="M1.800 5.600 L4.300 4.600 L5.200 3.600 L6.200 4.600 L8.800 5.400 L7.300 7.800 L5.200 8.600 L3.200 8Z" fill="#f8ec20"/><path d="M1.500 6.500 L3.300 7.300 L5 9.800 L4 10.300 L1.800 8.300Z" fill="#e82020"/><path d="M7.800 6.600 L8.800 6.200 L8.300 8 L7.300 8.200Z" fill="#e82020"/><rect x="6.500" y="8.300" width="2.500" height="2.200" fill="#1a2ab4"/></g><g transform="translate(99.8,353.48) scale(1)"><path d="M3.3 0.8 L7.200 0.8 L9.700 3.2 L9.700 6.500 L7.600 9 L3.200 9 L0.800 6.500 L0.800 3.200Z" fill="#fff" stroke="#1a2ab4" stroke-width="1.800"/><path d="M1.800 5.600 L4.300 4.600 L5.200 3.600 L6.200 4.600 L8.800 5.400 L7.300 7.800 L5.200 8.600 L3.200 8Z" fill="#f8ec20"/><path d="M1.500 6.500 L3.300 7.300 L5 9.800 L4 10.300 L1.800 8.300Z" fill="#e82020"/><path d="M7.800 6.600 L8.800 6.200 L8.300 8 L7.300 8.200Z" fill="#e82020"/><rect x="6.500" y="8.300" width="2.500" height="2.200" fill="#1a2ab4"/></g><g transform="translate(99.8,366.2) scale(1)"><path d="M3.3 0.8 L7.200 0.8 L9.700 3.2 L9.700 6.500 L7.600 9 L3.200 9 L0.800 6.500 L0.800 3.200Z" fill="#fff" stroke="#1a2ab4" stroke-width="1.800"/><path d="M1.800 5.600 L4.300 4.600 L5.200 3.600 L6.200 4.600 L8.800 5.400 L7.300 7.800 L5.200 8.600 L3.200 8Z" fill="#f8ec20"/><path d="M1.500 6.500 L3.300 7.300 L5 9.800 L4 10.300 L1.800 8.300Z" fill="#e82020"/><path d="M7.800 6.600 L8.800 6.200 L8.300 8 L7.300 8.200Z" fill="#e82020"/><rect x="6.500" y="8.300" width="2.500" height="2.200" fill="#1a2ab4"/></g><g transform="translate(99.8,378.92) scale(1)"><path d="M3.3 0.8 L7.200 0.8 L9.700 3.2 L9.700 6.500 L7.600 9 L3.200 9 L0.800 6.500 L0.800 3.200Z" fill="#fff" stroke="#1a2ab4" stroke-width="1.800"/><path d="M1.800 5.600 L4.300 4.600 L5.200 3.600 L6.200 4.600 L8.800 5.400 L7.300 7.800 L5.200 8.600 L3.200 8Z" fill="#f8ec20"/><path d="M1.500 6.500 L3.300 7.300 L5 9.800 L4 10.300 L1.800 8.300Z" fill="#e82020"/><path d="M7.800 6.600 L8.800 6.200 L8.300 8 L7.300 8.200Z" fill="#e82020"/><rect x="6.500" y="8.300" width="2.500" height="2.200" fill="#1a2ab4"/></g><polygon points="514.5,225.2 517.8,231.8 511.2,231.8" fill="#dddad4"/><line x1="511.2" y1="231.8" x2="514.5" y2="225.2" stroke="#fff" stroke-width="0.9"/><line x1="514.5" y1="225.2" x2="517.8" y2="231.8" stroke="#8a857e" stroke-width="0.9"/><line x1="517.8" y1="231.8" x2="511.2" y2="231.8" stroke="#8a857e" stroke-width="0.9"/><polygon points="511.2,378.7 517.8,378.7 514.5,385.3" fill="#dddad4"/><line x1="511.2" y1="378.7" x2="517.8" y2="378.7" stroke="#fff" stroke-width="0.9"/><line x1="514.5" y1="385.3" x2="511.2" y2="378.7" stroke="#fff" stroke-width="0.9"/><line x1="517.8" y1="378.7" x2="514.5" y2="385.3" stroke="#8a857e" stroke-width="0.9"/><polygon points="100.2,393.0 106.8,389.7 106.8,396.3" fill="#dddad4"/><line x1="100.2" y1="393.0" x2="106.8" y2="389.7" stroke="#fff" stroke-width="0.9"/><line x1="106.8" y1="389.7" x2="106.8" y2="396.3" stroke="#8a857e" stroke-width="0.9"/><line x1="106.8" y1="396.3" x2="100.2" y2="393.0" stroke="#8a857e" stroke-width="0.9"/><polygon points="499.7,389.7 506.3,393.0 499.7,396.3" fill="#dddad4"/><line x1="499.7" y1="396.3" x2="499.7" y2="389.7" stroke="#fff" stroke-width="0.9"/><line x1="499.7" y1="389.7" x2="506.3" y2="393.0" stroke="#fff" stroke-width="0.9"/><line x1="506.3" y1="393.0" x2="499.7" y2="396.3" stroke="#8a857e" stroke-width="0.9"/><g transform="translate(98,404) scale(1)"><rect x="0" y="0" width="13.300" height="12.300" fill="#000"/><rect x="1" y="0.800" width="11.800" height="7.200" fill="#f4f030"/><rect x="3.500" y="3" width="6" height="5" fill="#d8d8d4"/><path d="M3.500 1.500 L6.500 5 L9.500 1.500 M6.500 5 L5 8.500 M6.500 5 L9 8.500" stroke="#000" stroke-width="1.600" fill="none"/><rect x="4.500" y="0.800" width="1.500" height="1.500" fill="#e81818"/><rect x="8" y="0.800" width="1.500" height="1.500" fill="#e81818"/><rect x="8.500" y="8.500" width="4.300" height="2.500" fill="#fff"/><rect x="1.500" y="8.300" width="5" height="1.200" fill="#60d8d0"/><rect x="1" y="10.300" width="2.500" height="1.200" fill="#f4f030"/></g></svg>
<svg width="609" height="424" viewBox="0 0 609 424"><polyline points="77.0,18.5 87.5,18.5 109.5,40.5" fill="none" stroke="#000" stroke-width="1"/><polygon points="121.0,52.0 105.9,44.1 113.1,36.9" fill="#000"/><polyline points="77.0,60.5 87.5,60.5 108.4,81.1" fill="none" stroke="#000" stroke-width="1"/><polygon points="120.0,92.5 104.8,84.7 112.0,77.4" fill="#000"/><polyline points="73.0,128.5 83.5,128.5 105.1,150.4" fill="none" stroke="#000" stroke-width="1"/><polygon points="116.5,162.0 101.4,154.0 108.7,146.8" fill="#000"/><polyline points="80.0,297.5 90.5,297.5 113.0,320.0" fill="none" stroke="#000" stroke-width="1"/><polygon points="124.5,331.5 109.4,323.6 116.6,316.4" fill="#000"/><polyline points="87.5,382.5 98.5,382.5 120.4,404.1" fill="none" stroke="#000" stroke-width="1"/><polygon points="132.0,415.5 116.8,407.7 124.0,400.4" fill="#000"/><polyline points="542.0,123.5 530.5,123.5 509.5,144.6" fill="none" stroke="#000" stroke-width="1"/><polygon points="498.0,156.2 505.9,141.0 513.1,148.2" fill="#000"/><polyline points="548.0,186.5 536.0,186.5 514.4,208.7" fill="none" stroke="#000" stroke-width="1"/><polygon points="503.0,220.4 510.7,205.2 518.0,212.3" fill="#000"/><polyline points="557.0,378.5 547.0,378.5 525.7,399.9" fill="none" stroke="#000" stroke-width="1"/><polygon points="514.2,411.5 522.1,396.3 529.3,403.5" fill="#000"/></svg>
</div></body></html>
